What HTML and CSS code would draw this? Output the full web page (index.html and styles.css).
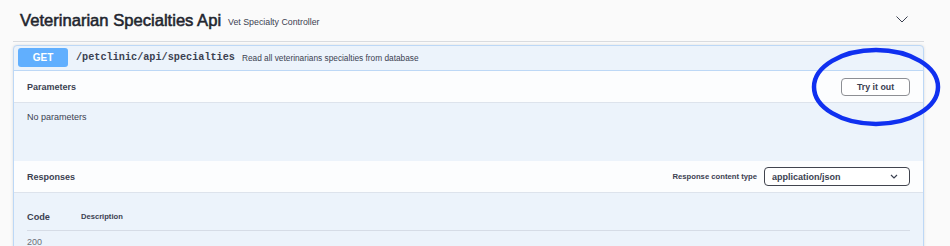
FILE: index.html
```html
<!doctype html>
<html>
	<head>
		<title>Swagger UI</title>
		<link rel="stylesheet" href="styles.css">
	</head>
	<body>
		<div class="wrapper">
			<div class="tag">
				<span class="tag-name">Veterinarian Specialties Api</span>
				<small class="tag-desc">Vet Specialty Controller</small>
				<svg class="tag-arrow" width="12" height="7" viewBox="0 0 12 7">
					<path d="M0.5 0.5 L6 6 L11.5 0.5" fill="none" stroke="#3b4151" stroke-width="1"/>
				</svg>
			</div>

			<div class="opblock">
				<div class="summary">
					<span class="method">GET</span>
					<span class="path">/petclinic/api/specialties</span>
					<span class="summary-desc">Read all veterinarians specialties from database</span>
				</div>

				<div class="section-header">
					<span class="section-title">Parameters</span>
					<button class="try-out">Try it out</button>
				</div>
				<div class="section-body params">
					No parameters
				</div>

				<div class="section-header">
					<span class="section-title">Responses</span>
					<label class="content-type">
						<span class="content-type-label">Response content type</span>
						<span class="select">
							application/json
							<svg width="8" height="5" viewBox="0 0 8 5">
								<path d="M1 1 L4 4 L7 1" fill="none" stroke="#3b4151" stroke-width="1.2"/>
							</svg>
						</span>
					</label>
				</div>
				<div class="responses">
					<div class="responses-head">
						<span class="col-code">Code</span>
						<span class="col-desc">Description</span>
					</div>
					<div class="response-row">200</div>
				</div>
			</div>
		</div>

		<!-- hand drawn annotation round the button -->
		<svg class="circle-mark" width="136" height="86" viewBox="0 0 136 86">
			<ellipse cx="68" cy="43" rx="62" ry="37" fill="none" stroke="#1030f0" stroke-width="4.5"/>
		</svg>
	</body>
</html>
```

FILE: styles.css
```css
body {
	margin: 0;
	background: #fafafa;
	color: #3b4151;
	font-family: "Liberation Sans", Arial, Helvetica, sans-serif;
}

.wrapper {
	padding: 0 26px 0 13px;
}

.tag {
	display: flex;
	align-items: center;
	height: 41px;
	padding-left: 7px;
	border-bottom: 1px solid #d9dbdf;
}

.tag-name {
	font-size: 16.6px;
	color: #22252e;
	-webkit-text-stroke: 0.55px #22252e;
}

.tag-desc {
	margin-left: 7px;
	font-size: 8.8px;
	padding-top: 2px;
}

.tag-arrow {
	margin-left: auto;
	margin-right: 16px;
	margin-bottom: 2px;
}

.opblock {
	margin-top: 3px;
	background: #ecf3fb;
	border: 1px solid #bdd8f6;
	border-radius: 4px;
	box-shadow: 0 0 3px rgba(0, 0, 0, 0.12);
	height: 220px;
	overflow: hidden;
}

.summary {
	display: flex;
	align-items: center;
	padding: 2px 4px 3px 4px;
	border-bottom: 1px solid #bdd8f6;
}

.method {
	width: 50px;
	height: 19px;
	line-height: 19px;
	text-align: center;
	background: #61affe;
	color: white;
	font-size: 10px;
	font-weight: bold;
	border-radius: 3px;
}

.path {
	margin-left: 8px;
	font-family: "Liberation Mono", "Courier New", monospace;
	font-size: 10.2px;
	font-weight: bold;
}

.summary-desc {
	margin-left: 7px;
	font-size: 8.3px;
}

.section-header {
	display: flex;
	align-items: center;
	height: 31px;
	padding: 0 13px;
	background: #fcfdfe;
	border-bottom: 1px solid #dde3ec;
}

.section-title {
	font-size: 9px;
	font-weight: bold;
}

.try-out {
	margin-left: auto;
	width: 69px;
	height: 18px;
	padding: 0;
	background: white;
	border: 1px solid #8d8f94;
	border-radius: 4px;
	font-family: inherit;
	font-size: 8.8px;
	font-weight: bold;
	color: #3b4151;
}

.params {
	height: 58px;
	padding: 9px 13px 0 13px;
	box-sizing: border-box;
	font-size: 9px;
}

.content-type {
	margin-left: auto;
	display: flex;
	align-items: center;
}

.content-type-label {
	font-size: 7.7px;
	font-weight: bold;
	margin-right: 7px;
}

.select {
	display: flex;
	align-items: center;
	justify-content: space-between;
	width: 146px;
	height: 19px;
	box-sizing: border-box;
	padding: 0 11px 0 7px;
	background: white;
	border: 1px solid #41444e;
	border-radius: 4px;
	font-size: 9px;
	font-weight: bold;
}

.responses {
	padding: 0 13px;
}

.responses-head {
	display: flex;
	align-items: center;
	height: 38px;
	padding-top: 10px;
	box-sizing: border-box;
	border-bottom: 1px solid #d6dce6;
}

.col-code {
	width: 54px;
	font-size: 9.2px;
	font-weight: bold;
}

.col-desc {
	font-size: 7.6px;
	font-weight: bold;
}

.response-row {
	padding-top: 6px;
	font-size: 9px;
	color: #6b6f78;
}

.circle-mark {
	position: absolute;
	left: 808px;
	top: 44px;
}
```
